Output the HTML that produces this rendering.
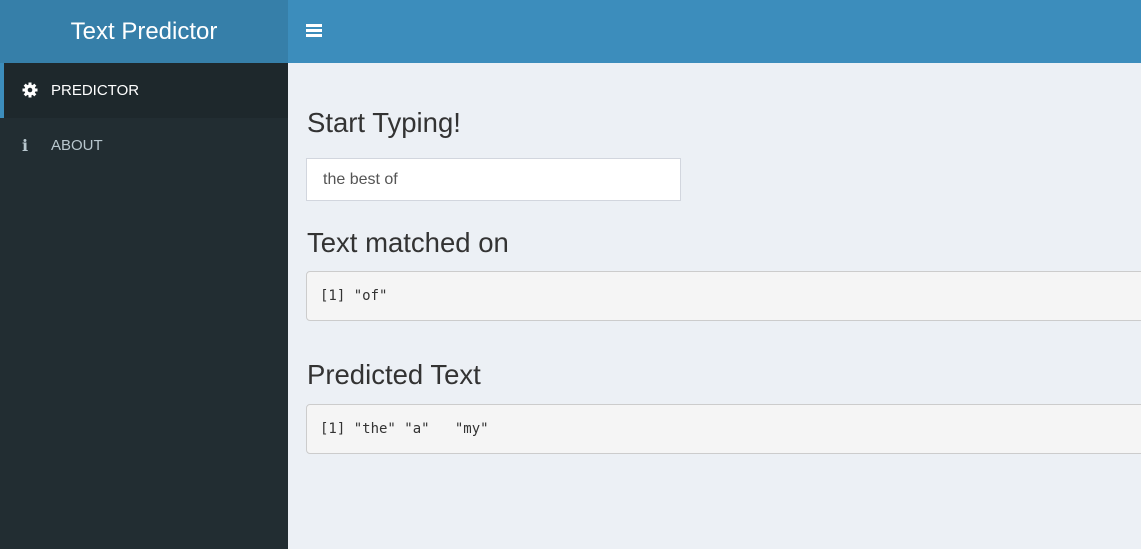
<!DOCTYPE html>
<html><head><style>
*{box-sizing:border-box;margin:0;padding:0}
body{width:1141px;height:549px;overflow:hidden;background:#ecf0f5;font-family:"Liberation Sans",sans-serif;position:relative}
.logo{position:absolute;left:0;top:0;width:288px;height:63px;background:#367fa9;color:#fff;font-size:24px;text-align:center;line-height:63px}
.top{position:absolute;left:288px;top:0;right:0;height:63px;background:#3c8dbc}
.burger{position:absolute;left:18px;top:24px;width:16px}
.burger i{display:block;height:3px;background:#fff;margin-bottom:2px}
.side{position:absolute;left:0;top:63px;width:288px;bottom:0;background:#222d32}
.item{height:55px;line-height:55px;font-size:15px;color:#b8c7ce;padding-left:51px;position:relative}
.item.act{background:#1e282c;color:#fff;border-left:4px solid #3c8dbc;padding-left:47px}
.ic{position:absolute;left:22px;top:0}
.content{position:absolute;left:307px;top:0;right:0}
h3{position:absolute;font-weight:400;font-size:27.5px;color:#333;left:0}
.inp{position:absolute;left:-1px;top:158px;width:375px;height:43px;background:#fff;border:1px solid #d2d6de;font-size:16px;color:#555;padding-left:16px;line-height:41px}
pre{position:absolute;left:-1px;right:-10px;height:50px;background:#f5f5f5;border:1px solid #ccc;border-radius:4px;font-family:"DejaVu Sans Mono","Liberation Mono",monospace;font-size:14px;color:#333;padding:15px 13px;line-height:18px}
</style></head><body>
<div class="logo">Text Predictor</div>
<div class="top"><div class="burger"><i></i><i></i><i></i></div></div>
<div class="side">
<div class="item act"><span class="ic" style="left:18px"><svg width="16" height="16" viewBox="0 0 16 16" style="vertical-align:-3px"><g fill="#fff"><circle cx="8" cy="8" r="5.5"/><rect x="6.5" y="0.5" width="3" height="15"/><rect x="0.5" y="6.5" width="15" height="3"/><rect x="6.5" y="0.5" width="3" height="15" transform="rotate(45 8 8)"/><rect x="6.5" y="0.5" width="3" height="15" transform="rotate(-45 8 8)"/></g><circle cx="8" cy="8" r="2.3" fill="#1e282c"/></svg></span>PREDICTOR</div>
<div class="item"><span class="ic" style="font-weight:bold;font-family:'DejaVu Serif',serif;font-size:16px">i</span>ABOUT</div>
</div>
<div class="content">
<h3 style="top:107px">Start Typing!</h3>
<div class="inp">the best of</div>
<h3 style="top:227px">Text matched on</h3>
<pre style="top:271px">[1] "of"</pre>
<h3 style="top:359px">Predicted Text</h3>
<pre style="top:404px">[1] "the" "a"   "my"</pre>
</div>
</body></html>
